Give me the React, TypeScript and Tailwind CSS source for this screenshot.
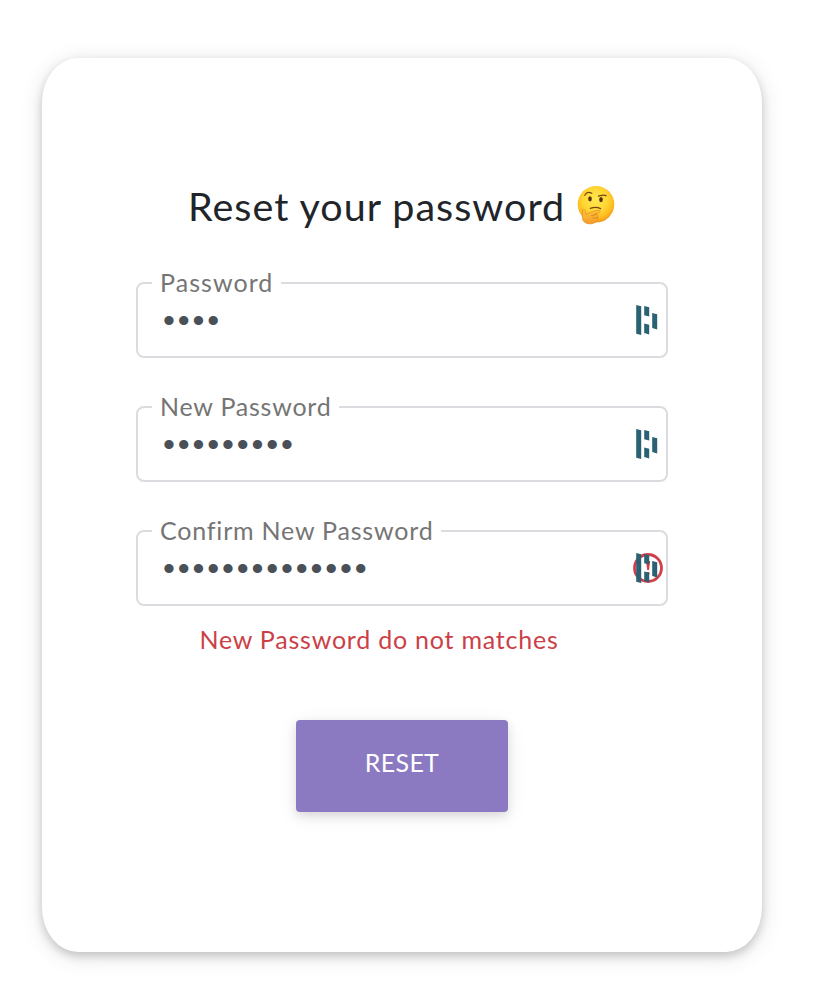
import React from "react";

function ThinkingFace() {
  return (
    <svg className="h-10 w-10 shrink-0" viewBox="0 0 40 40" aria-label="thinking face">
      <defs>
        <radialGradient id="face" cx="0.48" cy="0.38" r="0.64">
          <stop offset="0" stopColor="#ffe750" />
          <stop offset="0.5" stopColor="#ffd735" />
          <stop offset="0.8" stopColor="#fdb91f" />
          <stop offset="1" stopColor="#ee9116" />
        </radialGradient>
        <linearGradient id="hand" x1="0" y1="0" x2="0" y2="1">
          <stop offset="0" stopColor="#ffc83c" />
          <stop offset="1" stopColor="#f49b28" />
        </linearGradient>
      </defs>
      <circle cx="20" cy="19.3" r="18.3" fill="url(#face)" />
      <ellipse cx="14" cy="13.8" rx="1.8" ry="2.6" fill="#553010" />
      <ellipse cx="25" cy="14.6" rx="1.8" ry="2.6" fill="#553010" />
      <path d="M8.8 10.2C10.5 7.2 13 6.8 15.8 8.3" fill="none" stroke="#7a4514" strokeWidth="1.3" strokeLinecap="round" />
      <path d="M22.5 11.2C24.5 10.8 27 9 30 10.6" fill="none" stroke="#7a4514" strokeWidth="1.3" strokeLinecap="round" />
      <path d="M14.4 23.4C17 22.4 21.5 22 24.5 23.6" fill="none" stroke="#7a4514" strokeWidth="1.3" strokeLinecap="round" />
      <path
        d="M6.6 25C8 23.8 9.2 25 9.6 27L10.3 29.6C14 27 18.5 25.7 22.4 25.3C24.6 25.2 24.8 27.5 22.6 28L18.5 29.2C21.5 29.4 22.6 30.3 22 32C22.3 36 18.5 38.8 14 38.8C9.2 38.8 6.4 36.4 6.3 32Z"
        fill="url(#hand)"
        stroke="#e5861c"
        strokeWidth="0.7"
      />
      <path d="M15.5 30.6L20.6 29.4M17 33.2L21.6 32.6" stroke="#d97b16" strokeWidth="0.8" strokeLinecap="round" />
    </svg>
  );
}

function ManagerIcon() {
  return (
    <svg className="absolute top-[21px] right-[8px] h-[30px] w-[22px]" viewBox="0 0 22 30" fill="#2b6172">
      <path d="M0.2 0L5.2 1.3V30L0.2 28.7Z" />
      <path d="M8.2 1L13.2 2.3V11.6L8.2 10.3Z" />
      <path d="M8.2 18.4L13.2 19.7V29.4L8.2 28.1Z" />
      <path d="M16.2 8L21.2 9.3V24.4L16.2 23.1Z" />
    </svg>
  );
}

function InvalidIcon() {
  return (
    <svg className="absolute top-[21px] right-[3px] h-[30px] w-[30px]" viewBox="0 0 30 30">
      <circle cx="15" cy="15" r="13.5" fill="none" stroke="#d0404a" strokeWidth="2.8" />
      <path d="M13 8H17.2L16 17H14.2Z" fill="#d0404a" />
      <circle cx="15" cy="20.4" r="1.6" fill="#d0404a" />
    </svg>
  );
}

interface FieldProps {
  label: string;
  labelClass: string;
  length: number;
  invalid?: boolean;
}

function Field({ label, labelClass, length, invalid }: FieldProps) {
  return (
    <div className="relative flex h-[76px] w-[532px] rounded-[8px] border-2 border-[#dcdce0] pl-[25px]">
      <span className={"absolute -top-[18px] left-[14px] bg-white px-[8px] text-[25px] leading-[32px] whitespace-nowrap text-[#757575] " + labelClass}>
        {label}
      </span>
      <span className="mt-[16px] h-[40px] font-['Liberation_Sans',sans-serif] text-[34px] leading-[40px] tracking-[2.85px] text-[#4a5058]">
        {"•".repeat(length)}
      </span>
      {invalid && <InvalidIcon />}
      <ManagerIcon />
    </div>
  );
}

export default function App() {
  return (
    <main className="h-[1006px] w-[816px] overflow-hidden bg-white pt-[58px] pl-[42px] font-['Lato',sans-serif]">
      <section className="flex h-[894px] w-[720px] flex-col items-center rounded-[5%] bg-white pt-[122px] shadow-[0_4px_10px_rgba(0,0,0,0.18),0_4px_24px_rgba(0,0,0,0.11)]">
        <h1 className="flex h-[50px] w-[428px] items-center justify-between text-[39.5px] leading-[50px] whitespace-nowrap text-[#212529]">
          <span className="pt-[2px] tracking-[1px]">Reset your password</span>
          <ThinkingFace />
        </h1>
        <form className="mt-[52px] flex flex-col gap-[48px]">
          <Field label="Password" labelClass="tracking-[1.05px]" length={4} />
          <Field label="New Password" labelClass="tracking-[0.77px]" length={9} />
          <Field label="Confirm New Password" labelClass="tracking-[0.8px]" length={14} invalid />
        </form>
        <p className="mt-[16px] mr-[46px] text-[25px] leading-[34px] tracking-[0.78px] whitespace-nowrap text-[#cc3f47]">
          New Password do not matches
        </p>
        <button
          type="button"
          className="mt-[64px] h-[92px] w-[212px] rounded-[4px] bg-[#8b79c2] pb-[6px] text-[25px] tracking-[0.3px] text-white shadow-[0_4px_10px_rgba(0,0,0,0.1),0_4px_20px_rgba(0,0,0,0.08)]"
        >
          RESET
        </button>
      </section>
    </main>
  );
}
